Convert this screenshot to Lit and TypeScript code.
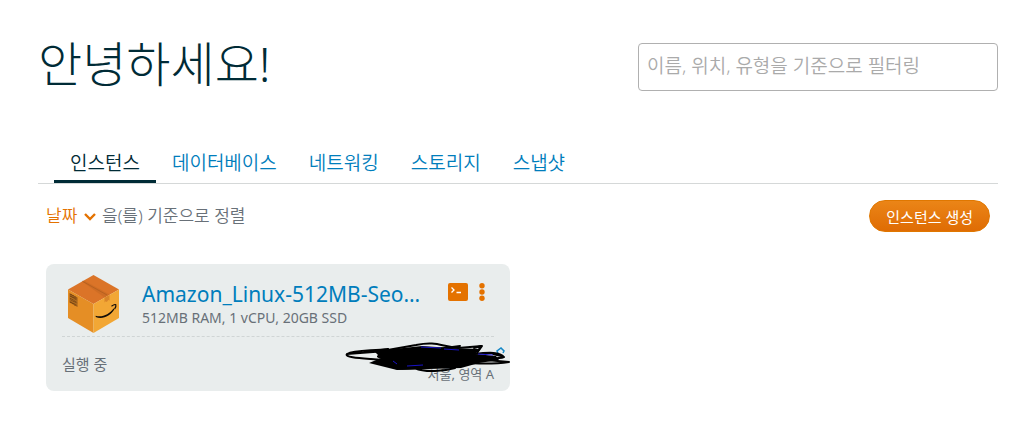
import { LitElement, html, css } from "lit";
import { customElement, property } from "lit/decorators.js";

interface Instance {
  name: string;
  specs: string;
  status: string;
  zone: string;
}

const TABS = ["인스턴스", "데이터베이스", "네트워킹", "스토리지", "스냅샷"];

const INSTANCES: Instance[] = [
  {
    name: "Amazon_Linux-512MB-Seoul-1",
    specs: "512MB RAM, 1 vCPU, 20GB SSD",
    status: "실행 중",
    zone: "서울, 영역 A",
  },
];

@customElement("instance-card")
export class InstanceCard extends LitElement {
  @property({ attribute: false }) instance!: Instance;

  static styles = css`
    :host {
      display: block;
      min-width: 0;
    }
    .card {
      position: relative;
      padding: 8px 16px;
      border-radius: 8px;
      background: #e9eded;
      color: #687078;
    }
    .top {
      display: flex;
      height: 64px;
      border-bottom: 1px dashed #d0d5d5;
    }
    .box {
      flex: none;
      width: 64px;
      height: 64px;
    }
    .info {
      flex: 1;
      min-width: 0;
      padding: 8px 0 0 16px;
    }
    .name {
      display: block;
      overflow: hidden;
      text-overflow: ellipsis;
      white-space: nowrap;
      color: #007dbc;
      font-size: 21px;
      line-height: 28px;
      text-decoration: none;
    }
    .specs {
      font-size: 14px;
      line-height: 20px;
    }
    .actions {
      display: flex;
      flex: none;
      align-items: flex-start;
      gap: 8px;
      padding: 11px 6px 0 20px;
    }
    .action {
      display: flex;
      padding: 0;
      border: 0;
      background: none;
      cursor: pointer;
    }
    .bottom {
      display: flex;
      justify-content: space-between;
      padding: 16px 0 0;
    }
    .status {
      font-size: 15px;
      line-height: 22px;
    }
    .zone {
      padding-top: 12px;
      font-size: 13px;
      line-height: 18px;
    }
    .scribble {
      position: absolute;
      right: -2px;
      top: 76px;
      width: 168px;
      height: 32px;
      overflow: visible;
    }
  `;

  render() {
    const { name, specs, status, zone } = this.instance;
    return html`
      <article class="card">
        <div class="top">
          <svg class="box" viewBox="0 0 64 64" aria-hidden="true">
            <path fill="#db7428" d="M31.500 3 57 17.500 31.500 32 6 17.500z" />
            <path fill="#e58e25" d="M6 17.500 31.500 32v29L6 46z" />
            <path fill="#f2a735" d="M31.500 32 57 17.500V46L31.500 61z" />
            <path fill="#b8611f" d="M20 9.500 22 8.400 47.500 22.500 42.500 25.500z" opacity=".35" />
            <path stroke="#b8611f" fill="none" d="M20.500 9.300 45 23" />
            <path fill="#d98529" d="M42.500 25.700 47.500 22.900v5.600l-1.300-.5-1.300 2-1.200-.8-1.200 1.300z" />
            <path fill="#9a5b1b" d="M7.500 21 15.500 25.500V35L7.500 30.500z" />
            <path stroke="#61390f" fill="none" stroke-dasharray="1 1" d="M9 22v9M11 23v9M13 24.500v9" />
            <path stroke="#d08426" fill="none" stroke-width=".6" d="M7.500 25l8 4.500M7.500 28l8 4.500" />
            <path fill="#120d08" d="M33.700 43.800c6.500 1.800 13.500-1.300 17.800-7.300l1 .6C48.500 44.500 40 48 33.700 45z" />
            <path stroke="#120d08" fill="none" stroke-width="1.200" d="M49.500 34.300c1.800-1.500 3.800-2.200 4.300-1.600.3.800-.3 2.800-1.200 4.300" />
          </svg>
          <div class="info">
            <a class="name" href="#instance">${name}</a>
            <div class="specs">${specs}</div>
          </div>
          <div class="actions">
            <button class="action" aria-label="터미널 연결">
              <svg width="20" height="18" viewBox="0 0 20 18">
                <rect width="20" height="18" rx="2" fill="#e47200" />
                <path d="M3.500 4.500 6 7 3.500 9.500M8.500 9.500H13" stroke="#fff" stroke-width="1.300" fill="none" />
              </svg>
            </button>
            <button class="action" aria-label="작업 메뉴">
              <svg width="12" height="18" viewBox="0 0 12 18" fill="#e47200">
                <circle cx="6" cy="2.700" r="2.700" />
                <circle cx="6" cy="9" r="2.700" />
                <circle cx="6" cy="15.300" r="2.700" />
              </svg>
            </button>
          </div>
        </div>
        <div class="bottom">
          <span class="status">${status}</span>
          <span class="zone">${zone}</span>
        </div>
        <svg class="scribble" viewBox="0 0 168 32" aria-hidden="true">
          <path fill="none" stroke="#1487c6" stroke-width="1.500" d="m154 13-1-2 4-3 3 3-1 2" />
          <path d="M50 9 78 6l30 2 28 1-5 5 21 2 3 4-20 3-18 5-32 1-32 1-28-7 12-5-8-8z" />
          <g fill="none" stroke="#000" stroke-width="2" stroke-linecap="round" stroke-linejoin="round">
            <path d="M44 9C27 11 10 10 3 14c-3 3 11 4 24 5l24 2M3 14l52-4M38 11 72 5c20-4 24 1 42 3l24-2-5 7" />
            <path d="M35 15c12-3 42-5 35-1s-30 5-35 3 8-1 23 2M48 19c-5 7 3 11 15 8M53 25c-7 5 10 3 18 3 10 5 30 3 40 0" />
            <path d="M130 14c16-2 26-2 30 3-8 3-20 0-29 2l34 3c-20 3-34 1-46 1M149 14l8 2M142 20l23 2" />
            <path d="M47 24c0 6 12 5 28 4M48 10l22 2 46-6M130 8l7-2-3 5" />
          </g>
          <path fill="none" stroke="#1812c8" stroke-width="1" d="m77 7 20 1M100 9l15 1M134 14l15 1M49 21l4 3M63 26l16-1" />
        </svg>
      </article>
    `;
  }
}

@customElement("app-root")
export class AppRoot extends LitElement {
  static styles = css`
    :host {
      display: block;
      padding: 32px 35px 32px 38px;
      background: #fff;
      color: #687078;
      font-family: "Noto Sans", "Noto Sans CJK KR", sans-serif;
    }
    .header {
      display: flex;
      align-items: flex-start;
      justify-content: space-between;
      gap: 24px;
    }
    .title {
      margin: 0;
      color: #002b36;
      font-size: 48px;
      font-weight: 300;
      line-height: 64px;
    }
    .filter {
      box-sizing: border-box;
      width: 360px;
      height: 48px;
      margin: 11px 0 0;
      padding: 0 8px 2px;
      border: 1px solid #b0b0b0;
      border-radius: 4px;
      font: inherit;
      font-size: 19px;
      font-weight: 350;
    }
    .filter::placeholder {
      color: #aaa;
      opacity: 1;
    }
    .tabs {
      display: flex;
      margin-top: 52px;
      padding: 0 16px;
      border-bottom: 1px solid #d5d8d8;
    }
    .tab {
      padding: 0 16px 2px;
      border-bottom: 3px solid transparent;
      color: #007dbc;
      font-size: 19px;
      font-weight: 350;
      line-height: 30px;
      text-decoration: none;
    }
    .tab[aria-current] {
      border-color: #002b36;
      color: #002b36;
    }
    .toolbar {
      display: flex;
      align-items: center;
      justify-content: space-between;
      padding: 16px 8px;
    }
    .sort {
      display: flex;
      align-items: center;
      font-size: 17px;
      font-weight: 350;
      line-height: 24px;
    }
    .sort-by {
      appearance: none;
      width: 56px;
      padding: 0;
      border: 0;
      background: none;
      color: #e47200;
      font: inherit;
    }
    .chevron {
      width: 12px;
      height: 8px;
      margin: 2px 6px 0 -18px;
      pointer-events: none;
    }
    .create {
      height: 32px;
      padding: 0 16px;
      border: 1px solid #e07700;
      border-radius: 16px;
      background: linear-gradient(#eb8517, #df6c04);
      color: #fff;
      font: inherit;
      font-size: 15px;
    }
    .cards {
      display: grid;
      grid-template-columns: repeat(auto-fill, minmax(400px, 1fr));
      gap: 16px;
      padding: 16px 8px;
    }
  `;

  render() {
    return html`
      <header class="header">
        <h1 class="title">안녕하세요!</h1>
        <input class="filter" type="text" aria-label="필터" placeholder="이름, 위치, 유형을 기준으로 필터링" />
      </header>
      <nav class="tabs">
        ${TABS.map((tab, i) =>
          i === 0
            ? html`<a class="tab" href="#" aria-current="page">${tab}</a>`
            : html`<a class="tab" href="#">${tab}</a>`
        )}
      </nav>
      <div class="toolbar">
        <div class="sort">
          <select class="sort-by" id="sort">
            <option>날짜</option>
          </select>
          <svg class="chevron" viewBox="0 0 12 8" aria-hidden="true">
            <path d="m1 1 5 5 5-5" fill="none" stroke="#e47200" stroke-width="2.400" />
          </svg>
          <label for="sort">을(를) 기준으로 정렬</label>
        </div>
        <button class="create">인스턴스 생성</button>
      </div>
      <main class="cards">
        ${INSTANCES.map((item) => html`<instance-card .instance=${item}></instance-card>`)}
      </main>
    `;
  }
}
